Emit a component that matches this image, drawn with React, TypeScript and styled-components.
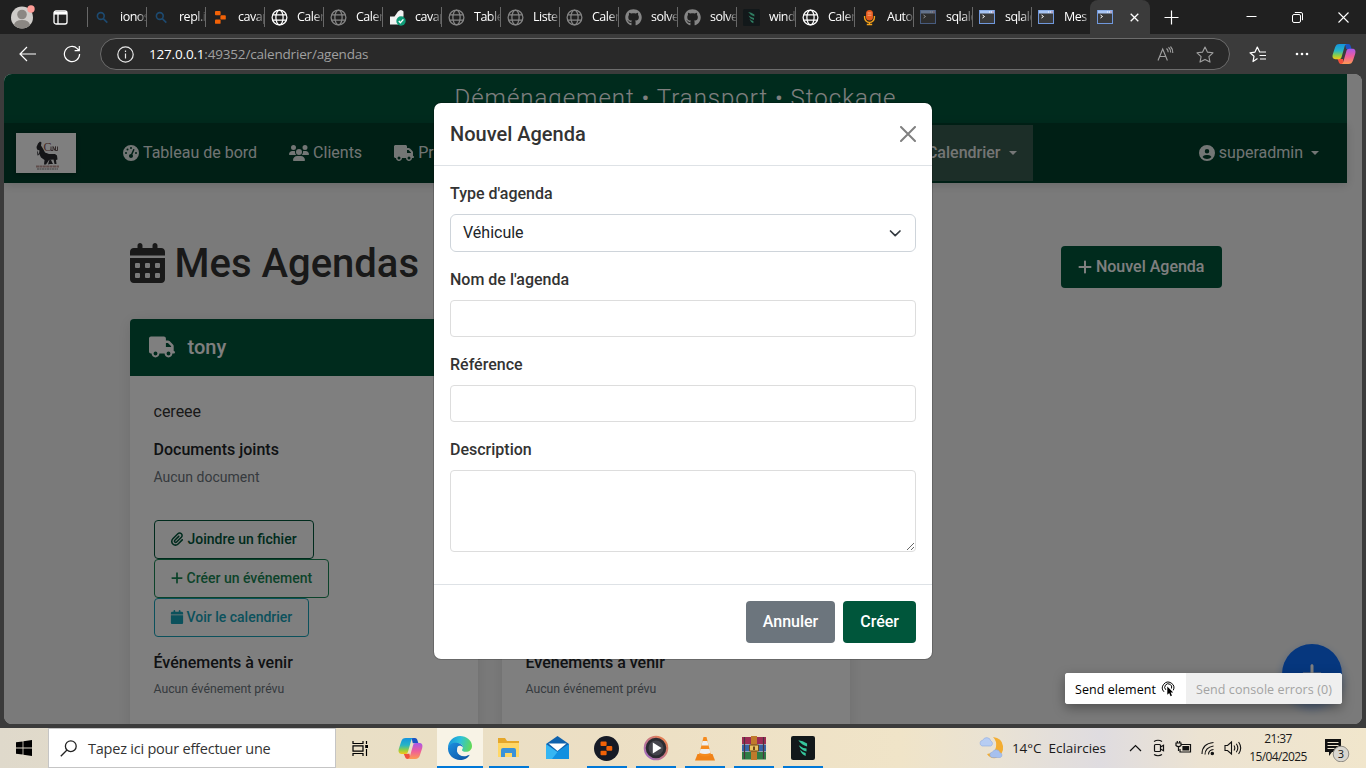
import React from "react";
import styled, { createGlobalStyle, css } from "styled-components";
import {
  FaCalendar,
  FaCalendarDays,
  FaCircleUser,
  FaGaugeHigh,
  FaGithub,
  FaPaperclip,
  FaPlus,
  FaTruck,
  FaUsers,
} from "react-icons/fa6";

const segoe = `"Segoe UI", "Open Sans", "Noto Sans", sans-serif`;
const roboto = `Roboto, "Liberation Sans", sans-serif`;

const Global = createGlobalStyle`
  * { box-sizing: border-box; }
  body { margin: 0; background: #3b3b3b; overflow: hidden; }
  h1, h2, h3, p { margin: 0; }
  svg { display: block; flex: none; }
  button, input, select, textarea { font-family: inherit; }
`;

const Screen = styled.div`
  width: 1366px;
  height: 768px;
  display: flex;
  flex-direction: column;
  overflow: hidden;
  background: #3b3b3b;
  font-family: ${segoe};
`;

/* ---------- browser chrome ---------- */

const TabStrip = styled.div`
  height: 34px;
  flex: none;
  display: flex;
  align-items: stretch;
  background: #202020;
  color: #fff;
`;

const StripLead = styled.div`
  width: 87px;
  display: flex;
  align-items: center;
  padding-left: 10px;
  gap: 18px;
`;

const Tab = styled.div`
  width: 59px;
  display: flex;
  align-items: center;
  padding-left: 7px;
  gap: 8px;
  background: linear-gradient(#686868, #686868) 0 7px / 1px 20px no-repeat;
`;

const TabLabel = styled.span`
  flex: 1;
  font-size: 12.5px;
  line-height: 18px;
  letter-spacing: -0.5px;
  padding-left: 1px;
  white-space: nowrap;
  overflow: hidden;
  mask-image: linear-gradient(90deg, #000 65%, rgba(0, 0, 0, 0.2) 100%);
`;

const ActiveTab = styled.div`
  width: 60px;
  display: flex;
  align-items: center;
  padding-left: 7px;
  gap: 16px;
  background: #3b3b3b;
  border-radius: 8px 8px 0 0;
`;

const WindowButtons = styled.div`
  flex: 1;
  display: flex;
  align-items: center;
  justify-content: space-between;
  padding: 0 17px 0 14px;
`;

const CaptionGroup = styled.div`
  display: flex;
  align-items: center;
  gap: 35px;
`;

const Toolbar = styled.div`
  height: 40px;
  flex: none;
  display: flex;
  align-items: center;
  background: #3b3b3b;
  padding: 0 10px 0 19px;
`;

const NavButtons = styled.div`
  width: 81px;
  display: flex;
  align-items: center;
  gap: 26px;
`;

const AddressBar = styled.div`
  width: 1130px;
  height: 32px;
  display: flex;
  align-items: center;
  background: #292929;
  border: 1px solid #6c6c6c;
  border-radius: 16px;
  padding: 0 15px 0 16px;
`;

const Address = styled.span`
  flex: 1;
  margin-left: 15px;
  font-size: 13.5px;
  letter-spacing: -0.18px;
  color: #a0a0a0;
  b {
    font-weight: 400;
    color: #fff;
  }
`;

const AddressTools = styled.div`
  display: flex;
  align-items: center;
  gap: 22px;
`;

const ToolbarEnd = styled.div`
  flex: 1;
  display: flex;
  align-items: center;
  padding-left: 19px;
  gap: 28px;
  svg:last-child {
    margin: 0 0 0 -5px;
  }
`;

/* ---------- web page ---------- */

const Viewport = styled.main`
  position: relative;
  width: 1358px;
  height: 650px;
  margin: 0 4px 4px;
  flex: none;
  overflow: hidden;
  border-radius: 8px;
  background: #f5f5f5;
  font-family: ${roboto};
  font-size: 16px;
  line-height: 24px;
  color: #333;
`;

const Page = styled.div`
  width: 1343px;
`;

const Slogan = styled.div`
  height: 49px;
  display: flex;
  justify-content: center;
  background: #00563b;
  color: #fff;
  font-size: 24px;
  font-weight: 300;
  letter-spacing: 1px;
  line-height: 48px;
`;

const Navbar = styled.nav`
  height: 60px;
  display: flex;
  align-items: center;
  background: #003e2b;
  padding: 0 12px;
  color: #fff;
  box-shadow: 0 2px 10px rgba(0, 0, 0, 0.15);
`;

const Brand = styled.div`
  width: 60px;
  height: 40px;
  background: #fff;
  margin-right: 31px;
  box-shadow: 0 1px 4px rgba(0, 0, 0, 0.3);
`;

const NavItem = styled.div<{ $active?: boolean; $end?: boolean }>`
  height: 56px;
  display: flex;
  align-items: center;
  gap: 4px;
  padding: 0 16px;
  color: rgba(255, 255, 255, 0.9);
  white-space: nowrap;
  ${(p) =>
    p.$active &&
    css`
      width: 148px;
      margin-left: 369px;
      background: #395c50;
      font-weight: 500;
      justify-content: flex-end;
    `}
  ${(p) => p.$end && "margin-left: auto;"}
`;

const Caret = styled.i`
  margin: 0 0 0 4px;
  border: 4.8px solid transparent;
  border-top-color: currentColor;
  border-bottom: 0;
`;

const Content = styled.div`
  width: 1092px;
  margin: 0 auto;
  padding-top: 56px;
`;

const TitleRow = styled.div`
  height: 49px;
  display: flex;
  align-items: flex-start;
  justify-content: space-between;
  margin-bottom: 31px;
`;

const Title = styled.h1`
  display: flex;
  align-items: center;
  gap: 10px;
  padding-top: 1px;
  font-size: 40px;
  font-weight: 500;
  line-height: 48px;
  svg {
    width: 35px;
    height: 40px;
    margin: -3px 0 0;
  }
`;

const Button = styled.button<{ $tone?: "grey" }>`
  height: 42px;
  display: flex;
  align-items: center;
  gap: 3px;
  padding: 0 17px 1px;
  border: 0;
  border-radius: 4px;
  background: ${(p) => (p.$tone === "grey" ? "#6c757d" : "#00563b")};
  color: #fff;
  font-size: 16px;
  font-weight: 500;
  white-space: nowrap;
`;

const NewAgenda = styled(Button)`
  margin-top: 7px;
  padding-left: 16px;
`;

const Cards = styled.div`
  display: flex;
  gap: 24px;
`;

const Card = styled.section`
  width: 348px;
  height: 460px;
  border-radius: 4px;
  background: #fff;
  box-shadow: 0 2px 15px rgba(0, 0, 0, 0.1);
`;

const CardHead = styled.header`
  height: 57px;
  display: flex;
  align-items: center;
  gap: 13px;
  padding: 0 0 2px 19px;
  border-radius: 4px 4px 0 0;
  background: #00563b;
  color: #fff;
  font-size: 20px;
  font-weight: 500;
`;

const CardBody = styled.div`
  padding: 24px;
`;

const Intro = styled.p`
  min-height: 24px;
  margin-bottom: 16px;
`;

const SubHead = styled.h3`
  font-size: 16px;
  font-weight: 500;
  line-height: 19px;
  margin-bottom: 8px;
  color: #212529;
`;

const Muted = styled.p<{ $small?: boolean }>`
  font-size: ${(p) => (p.$small ? 12.25 : 14)}px;
  line-height: ${(p) => (p.$small ? 19 : 21)}px;
  color: #6c757d;
`;

const Actions = styled.div`
  display: flex;
  flex-direction: column;
  align-items: flex-start;
  margin: 32px 0 16px;
`;

const OutlineButton = styled.button<{ $color: string; $gap?: number }>`
  height: 39px;
  display: flex;
  align-items: center;
  gap: ${(p) => p.$gap ?? 3}px;
  padding: 0 16px 2px 15px;
  border: 1px solid ${(p) => p.$color};
  border-radius: 4px;
  background: transparent;
  color: ${(p) => p.$color};
  font-size: 14px;
  font-weight: 500;
  white-space: nowrap;
`;

const Fab = styled.div`
  position: absolute;
  right: 20px;
  bottom: 20px;
  width: 60px;
  height: 60px;
  display: flex;
  align-items: center;
  justify-content: center;
  border-radius: 50%;
  background: #0d6efd;
  color: #fff;
  box-shadow: 0 4px 10px rgba(13, 110, 253, 0.4);
`;

const Backdrop = styled.div`
  position: absolute;
  inset: 0;
  display: flex;
  justify-content: center;
  align-items: flex-start;
  padding-top: 28px;
  background: rgba(0, 0, 0, 0.5);
`;

const Modal = styled.div`
  width: 500px;
  border: 1px solid rgba(0, 0, 0, 0.175);
  border-radius: 8px;
  background: #fff;
  background-clip: padding-box;
`;

const ModalHead = styled.div`
  height: 63px;
  display: flex;
  align-items: center;
  justify-content: space-between;
  padding: 0 16px;
  border-bottom: 1px solid #dee2e6;
`;

const ModalTitle = styled.h2`
  font-size: 20px;
  font-weight: 500;
  line-height: 30px;
`;

const ModalBody = styled.div`
  padding: 16px 16px 32px;
  display: flex;
  flex-direction: column;
  gap: 16px;
`;

const Field = styled.label`
  display: flex;
  flex-direction: column;
  gap: 8px;
  font-weight: 500;
`;

const Select = styled.div`
  height: 38px;
  display: flex;
  align-items: center;
  justify-content: space-between;
  padding: 0 12px;
  border: 1px solid #ced4da;
  border-radius: 6px;
  font-weight: 400;
  color: #212529;
  line-height: 24px;
`;

const Input = styled.input`
  height: 37px;
  width: 100%;
  border: 1px solid #ddd;
  border-radius: 4px;
  outline: 0;
`;

const TextArea = styled.textarea`
  height: 82px;
  width: 100%;
  display: block;
  border: 1px solid #ddd;
  border-radius: 4px;
  resize: vertical;
  outline: 0;
`;

const ModalFoot = styled.div`
  display: flex;
  justify-content: flex-end;
  gap: 8px;
  padding: 16px;
  border-top: 1px solid #dee2e6;
`;

const DevTools = styled.div`
  position: absolute;
  right: 20px;
  bottom: 20px;
  height: 31px;
  display: flex;
  border-radius: 3px;
  overflow: hidden;
  background: #fff;
  box-shadow: 0 4px 12px rgba(0, 0, 0, 0.35);
  font-family: ${segoe};
  font-size: 12.5px;
  line-height: 31px;
  white-space: nowrap;
`;

const DevAction = styled.div<{ $off?: boolean }>`
  width: ${(p) => (p.$off ? 156 : 121)}px;
  display: flex;
  align-items: center;
  gap: 5px;
  padding: 1px 0 0 10px;
  letter-spacing: ${(p) => (p.$off ? 0.08 : 0.05)}px;
  font-weight: 500;
  color: ${(p) => (p.$off ? "#a3a3a3" : "#000")};
  background: ${(p) => (p.$off ? "#efefef" : "#fff")};
`;

/* ---------- desktop task bar ---------- */

const Taskbar = styled.footer`
  height: 40px;
  flex: none;
  display: flex;
  background: linear-gradient(90deg, #dfd9cb 0, #e9dfc6 350px, #ecdfc4 600px, #f0e4c8 900px, #e9e2d4 1000px, #dfdce0 1100px, #ece3d2 1200px, #f1e6cc 1366px);
  color: #1a1a1a;
`;

const Start = styled.div`
  width: 48px;
  display: flex;
  align-items: center;
  justify-content: center;
`;

const Search = styled.div`
  width: 288px;
  display: flex;
  align-items: center;
  gap: 11px;
  padding-left: 11px;
  background: #fff;
  border: 1px solid #c5c5c5;
  color: #333;
  font-size: 14.5px;
  letter-spacing: -0.22px;
`;

const TaskSlot = styled.div<{ $run?: boolean; $focus?: boolean; $w?: number }>`
  width: ${(p) => p.$w ?? 49}px;
  display: flex;
  align-items: center;
  justify-content: center;
  ${(p) => p.$focus && "background: #f8f3e6;"}
  ${(p) =>
    p.$run &&
    css`
      box-shadow: inset 0 -2px #0078d7;
      margin: 0 ${p.$focus ? 1.5 : 4.5}px;
      width: ${p.$focus ? 46 : 40}px;
    `}
`;

const Tray = styled.div`
  flex: 1;
  display: flex;
  align-items: center;
  justify-content: flex-end;
  padding-right: 16px;
  font-size: 13.5px;
`;

const Weather = styled.span`
  margin: 0 23px 0 7px;
  font-size: 13.5px;
  letter-spacing: -0.02px;
  white-space: pre;
`;

const TrayIcons = styled.div`
  display: flex;
  align-items: center;
  gap: 8px;
`;

const Clock = styled.div`
  width: 62px;
  margin: 0 14px 0 5px;
  display: flex;
  flex-direction: column;
  align-items: center;
  font-size: 12px;
  line-height: 18px;
  letter-spacing: -0.6px;
`;

/* ---------- drawings ---------- */

const Globe = ({ dim }: { dim?: boolean }) => (
  <svg width="17" height="17" viewBox="0 0 17 17" fill="none" stroke={dim ? "#858585" : "#fff"} strokeWidth="1.25">
    <circle cx="8.5" cy="8.5" r="7.4" />
    <ellipse cx="8.5" cy="8.5" rx="3.6" ry="7.4" />
    <path d="M1.8 5.8h13.4M1.8 11.2h13.4" />
  </svg>
);

const Magnifier = () => (
  <svg width="17" height="17" viewBox="0 0 17 17" fill="none" stroke="#1d4a70" strokeWidth="1.6">
    <circle cx="6.8" cy="7" r="3.4" />
    <path d="M9.3 9.600l4 4" />
  </svg>
);

const Replit = ({ size = 17, pad = 0 }: { size?: number; pad?: number }) => (
  <svg width={size} height={size} viewBox={`${-pad} ${-pad} ${17 + pad * 2} ${17 + pad * 2}`} fill="#f26207">
    {pad > 0 && <circle cx="8.5" cy="8.5" r={8.5 + pad} fill="#161a25" />}
    <rect x="3" y="2" width="5.6" height="4.2" rx=".9" />
    <rect x="8.4" y="6.2" width="5.4" height="4.4" rx=".9" />
    <rect x="3" y="10.6" width="5.6" height="4.2" rx=".9" />
  </svg>
);

const Checked = () => (
  <svg width="17" height="17" viewBox="0 0 17 17">
    <path d="M1 7.5h4.5L9 2.5Q12-.5 14.5 2.5v5L9 10.5v5H1z" fill="#f2f2f2" />
    <circle cx="12" cy="12" r="4.7" fill="#0e9b77" />
    <path d="M9.8 12l1.6 1.7 3-3.3" fill="none" stroke="#fff" strokeWidth="1.4" />
  </svg>
);

const Feather = ({ size = 17, color = "#2f7d62" }: { size?: number; color?: string }) => (
  <svg width={size} height={size} viewBox="0 0 17 17">
    <rect width="17" height="17" rx="1.5" fill="#12181a" />
    <path d="M5.2 3q3 .2 6.2 2.4v2Q7.500 6.500 5.200 3zM5.500 6.500q2.500 2 5.500 2.400v2q-4-.8-5.500-4.400zM6.400 9.800q1.600 1.800 4 2.200v2.200q-3-1-4-4.400z" fill={color} />
  </svg>
);

const Mic = () => (
  <svg width="17" height="17" viewBox="0 0 17 17">
    <path d="M3.600 7v1.500a4.900 4.900 0 0 0 9.800 0V7M8.500 13v2.500M5.800 15.500h5.400" fill="none" stroke="#f5a31a" strokeWidth="1.400" />
    <rect x="5" y="1" width="7" height="10.500" rx="3.500" fill="#e65a1e" />
    <path d="M6.500 4h4M6.500 6.200h4" stroke="#ffc49b" strokeWidth=".8" />
  </svg>
);

const Console = ({ dim }: { dim?: boolean }) => (
  <svg width="17" height="17" viewBox="0 0 17 17" opacity={dim ? 0.5 : 1}>
    <rect x=".5" y="1.500" width="15" height="13" fill="#3a3a3a" stroke="#6f97dc" />
    <path d="M1 1.500h14v3H1z" fill="#a8c4f3" />
    <path d="M10 3h1M12 3h1" stroke="#fff" />
    <path d="M13.500 3h1" stroke="#e2574c" />
    <path d="M3.500 6l2 1.500-2 1.500" fill="none" stroke="#fff" />
  </svg>
);

const Copilot = ({ size, id }: { size: number; id: string }) => (
  <svg width={size} height={size} viewBox="0 0 24 24">
    <defs>
      <linearGradient id={`${id}a`} x1="0" y1="0" x2="0" y2="1">
        <stop stopColor="#1494df" />
        <stop offset=".45" stopColor="#28b5c4" />
        <stop offset=".75" stopColor="#8fce45" />
        <stop offset="1" stopColor="#f5c518" />
      </linearGradient>
      <linearGradient id={`${id}b`} x1="0" y1="0" x2="0" y2="1">
        <stop stopColor="#a958e8" />
        <stop offset=".5" stopColor="#ee5d9b" />
        <stop offset="1" stopColor="#fd9a52" />
      </linearGradient>
    </defs>
    <path d="M13 2h3.300c1.500 0 2 .8 2.500 2.500L19.600 7h-5.400z" fill="#1c53c4" />
    <path d="M5.500 17l1.200 3c.6 1.500 1.200 2 2.500 2H12l-1-5z" fill="#f0503c" />
    <path d="M7.500 2H15c-1.400 0-2 1-2.500 2.700L9.600 15c-.5 1.500-1.200 2.200-2.800 2.200H3.500C.8 17.200 0 15 .8 12.300L3 5.500C3.900 3 5 2 7.500 2z" fill={`url(#${id}a)`} />
    <path d="M16.500 22H9c1.400 0 2-1 2.500-2.700L14.400 9c.5-1.500 1.200-2.200 2.800-2.200h3.300c2.700 0 3.500 2.200 2.700 4.900L21 18.500c-.9 2.500-2 3.500-4.500 3.500z" fill={`url(#${id}b)`} />
  </svg>
);

const Edge = () => (
  <svg width="24" height="24" viewBox="0 0 24 24">
    <defs>
      <linearGradient id="edgeTop" x1="0" y1=".3" x2="1" y2=".5">
        <stop stopColor="#1792dc" />
        <stop offset=".5" stopColor="#2fc2d8" />
        <stop offset="1" stopColor="#62d957" />
      </linearGradient>
      <linearGradient id="edgeLow" x1="0" y1="0" x2="1" y2="1">
        <stop stopColor="#1b8fe0" />
        <stop offset="1" stopColor="#0c4f9e" />
      </linearGradient>
    </defs>
    <path d="M0 12C0 5 5.500 0 12 0s12 4.500 12 10c0 3.500-2.600 5.800-6 5.800-2.700 0-4-.9-4-1.800 0-.6.900-1.100.9-2.700 0-2-2.200-4-5.300-4C5 7.300 1 9 0 12z" fill="url(#edgeTop)" />
    <path d="M0 12c.7-3.500 4.500-5.500 8.500-5.200 4 .2 6.400 2.600 6.400 4.600-1-1.500-2.500-2-3.800-1.600-2 .7-3 3-2.200 5.400 1.200 4 5.500 5.800 9.500 4.700 1.300-.4 2.600-1.200 3.300-1.200C20 22 16.200 24 12 24 5 24-.3 18.500 0 12z" fill="url(#edgeLow)" />
    <path d="M9.300 10.800C6 13.500 6.500 20.500 12 24c-3-2.500-4.500-6-3.100-8.800z" fill="#1373c8" />
  </svg>
);

const Explorer = () => (
  <svg width="23" height="22" viewBox="0 0 23 22">
    <path d="M1 1h7l2 3h12v16H1z" fill="#e5a72a" />
    <path d="M1 6h21v14H1z" fill="#ffd766" />
    <path d="M4 20v-7q0-2 2-2h11q2 0 2 2v7h-4v-4H8v4z" fill="#3a92d8" />
  </svg>
);

const Mail = () => (
  <svg width="25" height="24" viewBox="0 0 25 24">
    <path d="M1 8L12.500 0 24 8v15H1z" fill="#0f62ad" />
    <path d="M3.500 7.500h18L12.500 15z" fill="#fff" />
    <path d="M24 8v15H1z" fill="#1290e0" />
    <path d="M1 8l11.500 8L7 23H1z" fill="#35b6f3" />
  </svg>
);

const Player = () => (
  <svg width="26" height="26" viewBox="0 0 26 26">
    <defs>
      <linearGradient id="ring" x1="0" y1="1" x2="1" y2="0">
        <stop stopColor="#9a6ac9" />
        <stop offset="1" stopColor="#f08342" />
      </linearGradient>
    </defs>
    <circle cx="13" cy="13" r="11.300" fill="#2b2b31" stroke="url(#ring)" strokeWidth="2" />
    <circle cx="13" cy="13" r="7.500" fill="#45454d" />
    <path d="M9.800 7.500l8.700 5.500-8.700 5.500z" fill="#fff" />
  </svg>
);

const Cone = () => (
  <svg width="22" height="25" viewBox="0 0 22 25">
    <path d="M3.500 18h15l2.500 6.500H1z" fill="#f08217" />
    <path d="M9.500 1h3L17 19q-6 3-12 0z" fill="#f58a1d" />
    <path d="M8.600 5h4.800l1.200 4.500H7.400zM6.500 13h9l1 4q-5.500 2-11 0z" fill="#eee" />
  </svg>
);

const WinRar = () => (
  <svg width="26" height="24" viewBox="0 0 26 24">
    <path d="M1 1h24v7H1z" fill="#9d2c54" />
    <path d="M1 8.500h24v7H1z" fill="#3864a6" />
    <path d="M1 16h24v7.500H1z" fill="#2f7d46" />
    <path d="M3.500 1v22M22.500 1v22" stroke="#4b3340" strokeWidth="1.200" />
    <path d="M10 0h6v24h-6z" fill="#c07a2c" />
    <path d="M8.500 9h9v6h-9z" fill="#e9c162" stroke="#704818" />
    <path d="M13 10.500v3.500" stroke="#704818" strokeWidth="2" />
  </svg>
);

const Horse = () => (
  <svg width="60" height="40" viewBox="0 0 60 40">
    <path
      d="M20.500 14l1.500-3.500 2-2 1.500 1-.5 3 2.500 4 1.500 3 4 1.500h6l2 1.500.5 4-1.500.5.500 4h-2l-1-4.500-4.500.5-3 4.500h-2l.5-4.500-3.500-2.500-2-4 .5-3-2.500-1zM21 17l2 5-1.500.5zM34 25l3 6h-3l-2 .500z"
      fill="#2a2a2e"
    />
    <text x="27.500" y="18" fontFamily="'Liberation Serif', serif" fontSize="12" fill="#8a5550">
      C
    </text>
    <path d="M35 13.500v4h2v-4l2 4 .5-4v4h2v-4" fill="none" stroke="#5d4a4a" strokeWidth=".9" />
    <path d="M20 33.500h23" stroke="#c09c96" strokeWidth="1.800" strokeDasharray="3 .4" />
    <path d="M21 36h21" stroke="#aaa" strokeWidth="1.300" strokeDasharray="2 .5" />
  </svg>
);

const tabs: [React.ReactNode, string][] = [
  [<Magnifier />, "ionos"],
  [<Magnifier />, "repl.it"],
  [<Replit />, "cavap"],
  [<Globe />, "Calen"],
  [<Globe dim />, "Calen"],
  [<Checked />, "cavap"],
  [<Globe dim />, "Table"],
  [<Globe dim />, "Liste"],
  [<Globe dim />, "Calen"],
  [<FaGithub size={17} color="#858585" />, "solve"],
  [<FaGithub size={17} color="#858585" />, "solve"],
  [<Feather />, "wind"],
  [<Globe />, "Calen"],
  [<Mic />, "Auto"],
  [<Console dim />, "sqlalc"],
  [<Console />, "sqlalc"],
  [<Console />, "Mes"],
];

const AgendaCard = ({ name, note }: { name: string; note: string }) => (
  <Card>
    <CardHead>
      <FaTruck size={26} />
      {name}
    </CardHead>
    <CardBody>
      <Intro>{note}</Intro>
      <SubHead>Documents joints</SubHead>
      <Muted>Aucun document</Muted>
      <Actions>
        <OutlineButton $color="#00563b" $gap={4}>
          <FaPaperclip size={14} />
          Joindre un fichier
        </OutlineButton>
        <OutlineButton $color="#198754">
          <FaPlus size={14} />
          Créer un événement
        </OutlineButton>
        <OutlineButton $color="#17a2b8">
          <FaCalendar size={14} />
          Voir le calendrier
        </OutlineButton>
      </Actions>
      <SubHead>Événements à venir</SubHead>
      <Muted $small>Aucun événement prévu</Muted>
    </CardBody>
  </Card>
);

export default function App() {
  return (
    <Screen>
      <Global />
      <TabStrip>
        <StripLead>
          <svg width="25" height="24" viewBox="0 0 25 24">
            <circle cx="12" cy="12.500" r="11" fill="#cfccc9" />
            <circle cx="12" cy="9.500" r="4.800" fill="#8b8783" />
            <path d="M4 20q1-5 8-5t8 5q-3.500 3.500-8 3.500T4 20z" fill="#8b8783" />
            <circle cx="21" cy="4" r="3.700" fill="#ff9d97" />
          </svg>
          <svg width="15" height="15" viewBox="0 0 15 15" fill="none" stroke="#fff" strokeWidth="1.300">
            <rect x="1" y="1" width="13" height="13" rx="2" />
            <path d="M1 3.200h13" strokeWidth="2.800" />
            <path d="M5 4v10" />
          </svg>
        </StripLead>
        {tabs.map(([icon, label], i) => (
          <Tab key={i}>
            {icon}
            <TabLabel>{label}</TabLabel>
          </Tab>
        ))}
        <ActiveTab>
          <Console />
          <svg width="9" height="9" viewBox="0 0 9 9" stroke="#fff" strokeWidth="1.300">
            <path d="M.7.7l7.600 7.600M8.300.7L.7 8.300" />
          </svg>
        </ActiveTab>
        <WindowButtons>
          <svg width="15" height="15" viewBox="0 0 15 15" stroke="#fff" strokeWidth="1.200">
            <path d="M7.500.5v14M.5 7.500h14" />
          </svg>
          <CaptionGroup>
            <svg width="11" height="10" viewBox="0 0 11 10" stroke="#fff">
              <path d="M.5 4.500h10" />
            </svg>
            <svg width="11" height="11" viewBox="0 0 11 11" fill="none" stroke="#fff">
              <rect x=".5" y="2.500" width="8" height="8" rx="1.500" />
              <path d="M2.800.5H9q1.500 0 1.500 1.500v6.200" />
            </svg>
            <svg width="11" height="11" viewBox="0 0 11 11" stroke="#fff" strokeWidth="1.100">
              <path d="M.5.5l10 10M10.500.5l-10 10" />
            </svg>
          </CaptionGroup>
        </WindowButtons>
      </TabStrip>

      <Toolbar>
        <NavButtons>
          <svg width="18" height="16" viewBox="0 0 18 16" fill="none" stroke="#fff" strokeWidth="1.200">
            <path d="M17 8H1.500M8 1L1 8l7 7" />
          </svg>
          <svg width="18" height="18" viewBox="0 0 18 18" fill="none" stroke="#fff" strokeWidth="1.200">
            <path d="M16.600 9a7.600 7.600 0 1 1-2.300-5.400L16 5.500M16.300 1v4.700h-4.700" />
          </svg>
        </NavButtons>
        <AddressBar>
          <svg width="17" height="17" viewBox="0 0 17 17" fill="none" stroke="#e8e8e8" strokeWidth="1.200">
            <circle cx="8.500" cy="8.500" r="7.700" />
            <path d="M8.500 7.500v5M8.500 4.500v1.500" />
          </svg>
          <Address>
            <b>127.0.0.1</b>:49352/calendrier/agendas
          </Address>
          <AddressTools>
            <svg width="17" height="16" viewBox="0 0 17 16" fill="none" stroke="#a0a0a0" strokeWidth="1.100">
              <path d="M1 14.500L5.700 3l4.700 11.500M2.600 10.500h6.200M9.500 2.500q1.700 1.500 1.700 3.700M11.500 1.200Q13.700 3 13.700 6.500M13.500.5Q16 3 15.800 7" />
            </svg>
            <svg width="18" height="17" viewBox="0 0 18 17" fill="none" stroke="#a0a0a0" strokeWidth="1.100" strokeLinejoin="round">
              <path d="M9 1l2.400 5.100 5.600.7-4.100 3.800 1.100 5.500L9 13.400l-5 2.700 1.100-5.500L1 6.800l5.600-.7z" />
            </svg>
          </AddressTools>
        </AddressBar>
        <ToolbarEnd>
          <svg width="18" height="17" viewBox="0 0 18 17" fill="none" stroke="#fff" strokeWidth="1.200" strokeLinejoin="round">
            <path d="M8.500 12.500L4 15.500l1-5.200L1 6.800l5-.7L8.300 1l2.400 5H17M10.500 9.500H17M11 13h6" />
          </svg>
          <svg width="14" height="4" viewBox="0 0 14 4" fill="#fff">
            <circle cx="2" cy="2" r="1.300" />
            <circle cx="7" cy="2" r="1.300" />
            <circle cx="12" cy="2" r="1.300" />
          </svg>
          <Copilot size={24} id="bar" />
        </ToolbarEnd>
      </Toolbar>

      <Viewport>
        <Page>
          <Slogan>Déménagement • Transport • Stockage</Slogan>
          <Navbar>
            <Brand>
              <Horse />
            </Brand>
            <NavItem>
              <FaGaugeHigh size={16} />
              Tableau de bord
            </NavItem>
            <NavItem>
              <FaUsers size={20} />
              Clients
            </NavItem>
            <NavItem>
              <FaTruck size={20} />
              Prestations
            </NavItem>
            <NavItem $active>
              Calendrier
              <Caret />
            </NavItem>
            <NavItem $end>
              <FaCircleUser size={16} />
              superadmin
              <Caret />
            </NavItem>
          </Navbar>
          <Content>
            <TitleRow>
              <Title>
                <FaCalendarDays />
                Mes Agendas
              </Title>
              <NewAgenda>
                <FaPlus size={16} />
                Nouvel Agenda
              </NewAgenda>
            </TitleRow>
            <Cards>
              <AgendaCard name="tony" note="cereee" />
              <AgendaCard name="" note="" />
            </Cards>
          </Content>
        </Page>
        <Fab>
          <FaPlus size={24} />
        </Fab>
        <Backdrop>
          <Modal>
            <ModalHead>
              <ModalTitle>Nouvel Agenda</ModalTitle>
              <svg width="16" height="16" viewBox="0 0 16 16" stroke="#808080" strokeWidth="2" strokeLinecap="round">
                <path d="M1 1l14 14M15 1L1 15" />
              </svg>
            </ModalHead>
            <ModalBody>
              <Field as="div">
                Type d'agenda
                <Select>
                  <span>Véhicule</span>
                  <svg width="16" height="16" viewBox="0 0 16 16" fill="none" stroke="#343a40" strokeWidth="1.700" strokeLinecap="round" strokeLinejoin="round">
                    <path d="M3.500 6l4.700 4.700L13 6" />
                  </svg>
                </Select>
              </Field>
              <Field>
                Nom de l'agenda
                <Input />
              </Field>
              <Field>
                Référence
                <Input />
              </Field>
              <Field>
                Description
                <TextArea />
              </Field>
            </ModalBody>
            <ModalFoot>
              <Button $tone="grey">Annuler</Button>
              <Button>Créer</Button>
            </ModalFoot>
          </Modal>
        </Backdrop>
        <DevTools>
          <DevAction>
            Send element
            <svg width="14" height="16" viewBox="0 0 14 16" fill="none" stroke="#000" strokeWidth="1">
              <path d="M3 10.800a5.700 5.700 0 1 1 9.300-1.500M4.800 8.800a3.500 3.500 0 1 1 5.700-1.300" />
              <path d="M6.300 5.500v8.300l1.900-1.700 1.400 3.100 1.400-.6-1.400-3h2.600z" fill="#000" stroke="none" />
            </svg>
          </DevAction>
          <DevAction $off>Send console errors (0)</DevAction>
        </DevTools>
      </Viewport>

      <Taskbar>
        <Start>
          <svg width="16" height="16" viewBox="0 0 16 16" fill="#000">
            <path d="M0 2.300L6.600 1.400V7.600H0zM7.400 1.300L16 0v7.600H7.400zM0 8.400h6.600v6.200L0 13.700zM7.400 8.400H16V16l-8.600-1.300z" />
          </svg>
        </Start>
        <Search>
          <svg width="17" height="17" viewBox="0 0 17 17" fill="none" stroke="#222" strokeWidth="1.300">
            <circle cx="10.800" cy="6.200" r="5.400" />
            <path d="M7 10L.8 16.200" />
          </svg>
          Tapez ici pour effectuer une
        </Search>
        <TaskSlot>
          <svg width="17" height="17" viewBox="0 0 17 17" fill="none" stroke="#000" strokeWidth="1.200">
            <path d="M1 1v2.500h10V1M1 16v-2.500h10V16M1 5.800h10v5.400H1zM14.500 1v3M14.500 9v7" />
            <path d="M13.200 5h2.800v3h-2.800z" fill="#000" stroke="none" />
          </svg>
        </TaskSlot>
        <TaskSlot $w={50}>
          <Copilot size={25} id="task" />
        </TaskSlot>
        <TaskSlot $run $focus>
          <Edge />
        </TaskSlot>
        <TaskSlot $run>
          <Explorer />
        </TaskSlot>
        <TaskSlot>
          <Mail />
        </TaskSlot>
        <TaskSlot $run>
          <Replit size={25} pad={3} />
        </TaskSlot>
        <TaskSlot $run>
          <Player />
        </TaskSlot>
        <TaskSlot $run>
          <Cone />
        </TaskSlot>
        <TaskSlot $run>
          <WinRar />
        </TaskSlot>
        <TaskSlot $run>
          <Feather size={24} color="#36c79c" />
        </TaskSlot>
        <Tray>
          <svg width="26" height="24" viewBox="0 0 26 24">
            <path d="M14 1q9 1 10 9t-7 12q-6 1-9-4 8-1 9-7t-3-10z" fill="#f3ad32" />
            <path d="M3 10a3 3 0 0 1 .8-5.800 4.200 4.200 0 0 1 8 .8 2.700 2.700 0 0 1 0 5z" fill="#b7cdf3" stroke="#8eabe0" strokeWidth=".6" />
            <path d="M13 21.500a2.800 2.800 0 0 1 .5-5.500 4 4 0 0 1 7.500.7 2.500 2.500 0 0 1 .3 4.800z" fill="#a6c0ee" stroke="#8eabe0" strokeWidth=".6" />
          </svg>
          <Weather>14°C  Eclaircies</Weather>
          <TrayIcons>
            <svg width="13" height="8" viewBox="0 0 13 8" fill="none" stroke="#111" strokeWidth="1.200">
              <path d="M1 7l5.500-5.500L12 7" />
            </svg>
            <svg width="17" height="18" viewBox="0 0 17 18" fill="none" stroke="#111" strokeWidth="1.200">
              <rect x="4.500" y="5.500" width="6" height="7" rx="1" />
              <path d="M10.500 8l3-1.800v5.600l-3-1.800M4 2.500q4-2.500 8 0M4 15.500q4 2.500 8 0" />
            </svg>
            <svg width="17" height="16" viewBox="0 0 17 16" fill="none" stroke="#111" strokeWidth="1.200">
              <path d="M6 4.500h9.500v7.500H5V9" />
              <path d="M8 6.500h5.500V10H8z" fill="#111" />
              <path d="M1 3h5v2.500q-2.500 2.500-5 0zM2.300 1v2M4.700 1v2M3.500 7v4" />
            </svg>
            <svg width="16" height="16" viewBox="0 0 16 16" fill="none" stroke="#111" strokeWidth="1.100">
              <path d="M2 14Q2 3.500 13.500 2.500M5 14.500Q5 7.500 13.500 6M8.500 14.500q0-4.500 5-5" />
              <circle cx="12.300" cy="13.500" r="1.200" fill="#111" />
            </svg>
            <svg width="18" height="16" viewBox="0 0 18 16" fill="none" stroke="#111" strokeWidth="1.100">
              <path d="M1 5.500h2.500L7.500 2v12l-4-3.500H1zM10 5.500q1.600 2.500 0 5M12.300 3.700q3 4.300 0 8.600M14.600 2q4.200 6 0 12" />
            </svg>
          </TrayIcons>
          <Clock>
            <span>21:37</span>
            <span>15/04/2025</span>
          </Clock>
          <svg width="27" height="28" viewBox="0 0 27 28">
            <path d="M2 5h16v13h-9l-3 4v-4H2z" fill="#111" />
            <path d="M4.500 8.500h11M4.500 11.500h11M4.500 14.500h7" stroke="#eee4cf" strokeWidth="1.200" />
            <circle cx="18" cy="20" r="7.800" fill="#d9d6cf" stroke="#8e8b84" />
            <text x="18" y="24" fontSize="11" textAnchor="middle" fill="#111">
              3
            </text>
          </svg>
        </Tray>
      </Taskbar>
    </Screen>
  );
}
